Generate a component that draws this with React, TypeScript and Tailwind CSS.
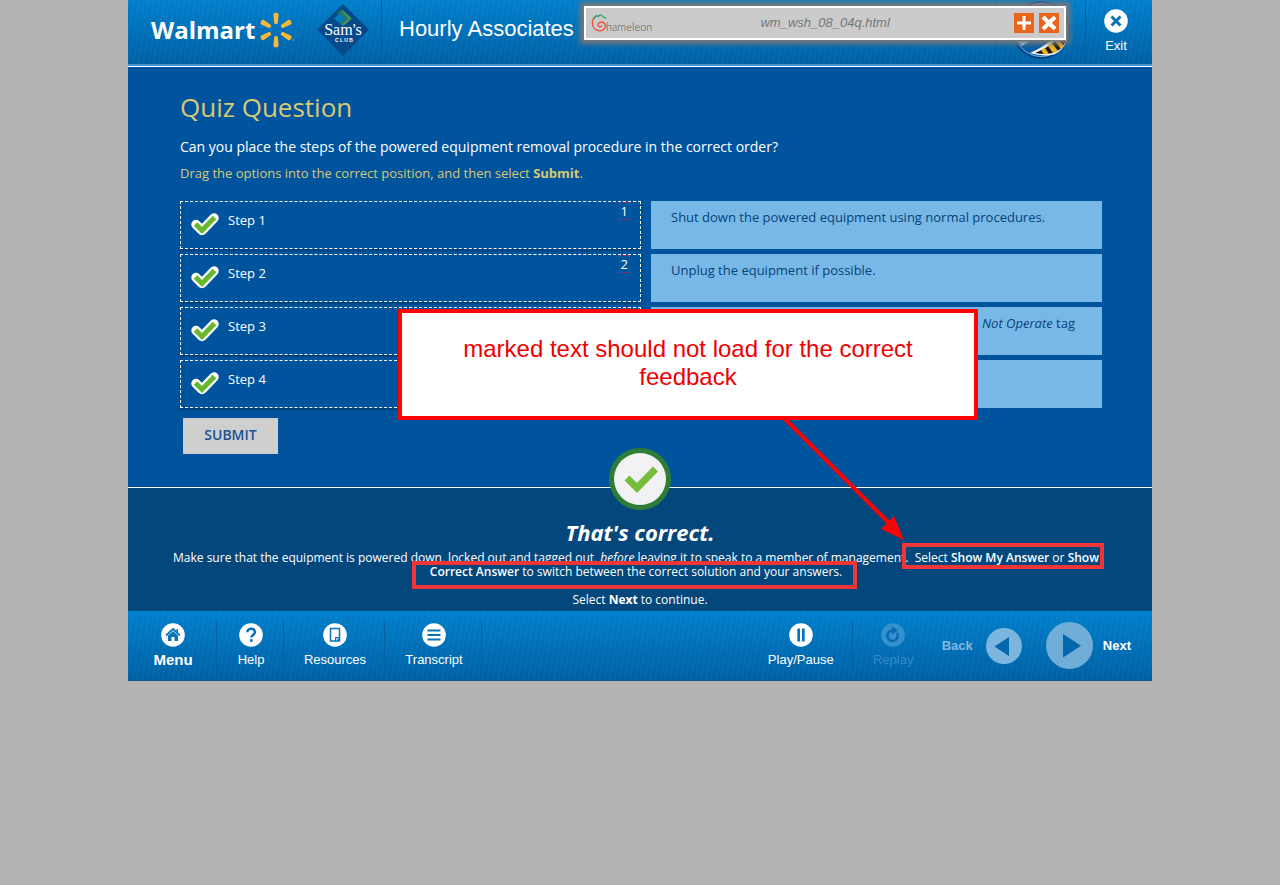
import React from "react";

const barClass =
  "bg-[repeating-linear-gradient(100deg,rgba(255,255,255,0.025)_0px,rgba(255,255,255,0.025)_2px,transparent_2px,transparent_5px),linear-gradient(to_bottom,#0080cc,#0060a4)]";

const steps = [
  { label: "Step 1", order: "1", option: <>Shut down the powered equipment using normal procedures.</> },
  { label: "Step 2", order: "2", option: <>Unplug the equipment if possible.</> },
  {
    label: "Step 3",
    order: "3",
    option: (
      <span className="block pr-[7px] text-right">
        <em>Do Not Operate</em> tag
      </span>
    ),
  },
  { label: "Step 4", order: "4", option: null },
];

function Spark() {
  return (
    <svg viewBox="-18 -18 36 36" className="size-9 shrink-0" aria-hidden="true">
      {[0, 60, 120, 180, 240, 300].map((a) => (
        <path
          key={a}
          transform={`rotate(${a})`}
          d="M-2.600-15.500C-2.600-18 2.600-18 2.600-15.500L1.800-7C1.600-5.700-1.600-5.700-1.800-7Z"
          fill="#f9b83a"
        />
      ))}
      <circle cx="17" cy="10" r="0.8" fill="#b9a56b" />
    </svg>
  );
}

function SamsLogo() {
  return (
    <svg viewBox="0 0 52 52" className="h-[52px] w-[52px] shrink-0" role="img" aria-label="Sam's Club">
      <path d="M26 0 52 25.500 26 52 0 25.500Z" fill="#074a8c" />
      <path d="m26 6 9 8.500-9 8-9-8Z" fill="#0879b8" />
      <path d="m25 5 10 9.500-9 8-3-3 5.500-5L20 8.500Z" fill="#27785a" opacity=".85" />
      <path d="m26 8 7 6.500-7 6" fill="none" stroke="#6d9d3b" strokeWidth="1.200" />
      <text x="26" y="31" textAnchor="middle" fontFamily="Liberation Serif, serif" fontSize="16" fill="#fff">
        Sam's
      </text>
      <text x="27" y="38" textAnchor="middle" fontFamily="Liberation Sans, sans-serif" fontSize="5" fontWeight="700" fill="#fff">
        C L U B
      </text>
    </svg>
  );
}

function StepCheck() {
  return (
    <svg viewBox="0 0 28 24" className="h-6 w-7 shrink-0" aria-hidden="true">
      <path d="M5 12.500 11 18.500 23 6" fill="none" stroke="#fff" strokeWidth="9.500" strokeLinecap="round" strokeLinejoin="round" />
      <path d="M4.500 12 11 18.500 23.500 5.500" fill="none" stroke="#67b82f" strokeWidth="5" />
    </svg>
  );
}

function Disc({ children }: { children: React.ReactNode }) {
  return (
    <svg viewBox="0 0 24 24" className="size-6" aria-hidden="true">
      <circle cx="12" cy="12" r="11.800" fill="#fff" />
      {children}
    </svg>
  );
}

const navItems = [
  {
    label: "Menu",
    box: "w-[89px] text-[15px] font-bold",
    icon: (
      <Disc>
        <path d="M5 12.500 12 6l7 6.500" fill="none" stroke="#0a72b8" strokeWidth="1.800" />
        <path d="M7 12.500 12 8.300l5 4.200V18h-3.500v-4h-3v4H7ZM15.500 6H17v4l-1.500-1.500Z" fill="#0a72b8" />
      </Disc>
    ),
  },
  {
    label: "Help",
    box: "w-[67px]",
    icon: (
      <Disc>
        <path d="M8.300 9.200c0-4.600 7.600-4.400 7.600 0 0 2.600-3.600 2.800-3.600 5.300" fill="none" stroke="#0a72b8" strokeWidth="2.500" />
        <rect x="11" y="16.200" width="2.600" height="2.600" fill="#0a72b8" />
      </Disc>
    ),
  },
  {
    label: "Resources",
    box: "w-[101px]",
    icon: (
      <Disc>
        <path d="M7.500 5.500h9v8.500l-3.500 4H7.500Z" fill="none" stroke="#0a72b8" strokeWidth="1.500" />
        <path d="M12 18.700V14h5.200v4.700Z" fill="#0a72b8" />
        <path d="M13.300 15.200h2.600l-2.600 2.600Z" fill="#fff" />
      </Disc>
    ),
  },
  {
    label: "Transcript",
    box: "w-[97px]",
    icon: (
      <Disc>
        <path d="M5.500 7.500h13M5.500 12h13M5.500 16.500h13" stroke="#0a72b8" strokeWidth="2.200" />
      </Disc>
    ),
  },
];

export default function App() {
  return (
    <div className="min-h-screen bg-[#b4b4b4] font-['Liberation_Sans',Arial,sans-serif] text-white">
      <div className="relative mx-auto max-w-[1024px]">
        <header className={`flex h-[66px] items-stretch border-b-2 border-[#4694cc] pl-[23px] ${barClass}`}>
          <div className="flex w-[231px] items-center gap-[3px] border-r border-[#0360a0] pb-1">
            <span className="font-['Open_Sans','Noto_Sans',sans-serif] text-[24px] leading-8 font-bold">Walmart</span>
            <Spark />
            <span className="ml-auto mr-3">
              <SamsLogo />
            </span>
          </div>
          <h1 className="flex flex-1 items-center pb-2 pl-[17px] text-[22px]">Hourly Associates</h1>
          <div className="flex w-[91px] justify-center border-x border-[#0360a0]">
            <svg viewBox="0 0 60 60" className="size-[60px]" aria-hidden="true">
              <circle cx="30" cy="30" r="28" fill="#075da8" stroke="#063e7b" strokeWidth="1.500" />
              <circle cx="30" cy="30" r="26.500" fill="none" stroke="#8fc4ea" strokeWidth=".8" />
              <path d="M7 41h12l-8 5Z" fill="#b7d5ee" />
              <path d="M19 53Q31 48 40 40H56Q52 51 43 54.500 31 57 19 53Z" fill="#fff" />
              <path d="M24 53Q36 48 44 41H55Q51 50 42 53 34 55 24 53Z" fill="#17191d" />
              <path d="m30 50 4-2 4 6-5 .5ZM37 46l4-3 6 8-5 2ZM44 41h5l4 5-3 3Z" fill="#eeb321" />
            </svg>
          </div>
          <a href="#exit" className="flex w-[66px] flex-col items-center pr-[6px] pt-[9px] text-[13px] leading-5">
            <svg viewBox="0 0 24 24" className="mb-[3px] size-6" aria-hidden="true">
              <circle cx="12" cy="12" r="11.800" fill="#fff" />
              <path d="m7.500 7.500 9 9m0-9-9 9" stroke="#0a72b8" strokeWidth="3" />
            </svg>
            Exit
          </a>
        </header>

        <main className="font-['Open_Sans','Noto_Sans',sans-serif]">
          <section className="h-[421px] border-t border-white bg-[#00549e] pl-[52px] pr-[50px] pt-[22px]">
            <h2 className="text-[26px] leading-9 text-[#d9c873]">Quiz Question</h2>
            <p className="mt-3 text-[14px] leading-5">
              Can you place the steps of the powered equipment removal procedure in the correct order?
            </p>
            <p className="mt-2 text-[13px] leading-4 text-[#d9c873]">
              Drag the options into the correct position, and then select <b>Submit</b>.
            </p>
            <ul className="mt-5 flex flex-col gap-[5px] text-[13px]">
              {steps.map((s) => (
                <li key={s.label} className="grid h-12 grid-cols-[461fr_451fr] gap-[10px]">
                  <div className="flex items-start border border-dashed border-white pl-[10px] pr-[10px] shadow-[0_2px_2px_rgba(0,0,0,0.25)]">
                    <span className="mt-[10px]">
                      <StepCheck />
                    </span>
                    <span className="ml-[9px] mt-2 leading-5">{s.label}</span>
                    <span className="ml-auto border border-dashed border-[#c4164c] px-px leading-4">{s.order}</span>
                  </div>
                  <div className="bg-[#78b8e7] px-5 pt-[6px] leading-5 text-[#07427a]">{s.option}</div>
                </li>
              ))}
            </ul>
            <button
              type="button"
              className="ml-[3px] mt-[10px] h-9 w-[95px] bg-[#cfcfcf] pb-1 text-[14px] font-semibold text-[#1c5190]"
            >
              SUBMIT
            </button>
          </section>

          <section className="relative h-[124px] border-t border-white bg-[#04477c] pt-[30px] text-center text-[12px] leading-[14px]">
            <svg viewBox="0 0 62 62" className="absolute -top-10 left-1/2 size-[62px] -translate-x-1/2" aria-hidden="true">
              <circle cx="31" cy="31" r="31" fill="#2e7d37" />
              <circle cx="31" cy="31" r="26" fill="#f2f2f4" />
              <path d="M18 30 28 40 46.500 21" fill="none" stroke="#76bd3b" strokeWidth="7" />
            </svg>
            <h3 className="text-[22px] leading-7 font-bold italic">That's correct.</h3>
            <p className="mt-[5px] pr-2 whitespace-nowrap">
              Make sure that the equipment is powered down, locked out and tagged out, <em>before</em> leaving it to speak
              to a member of management. &nbsp;Select <b className="font-semibold">Show My Answer</b> or{" "}
              <b className="font-semibold">Show</b>
              <br />
              <b className="font-semibold">Correct Answer</b> to switch between the correct solution and your answers.
            </p>
            <p className="mt-[14px]">
              Select <b>Next</b> to continue.
            </p>
          </section>
        </main>

        <footer className={`flex h-[70px] border-b border-[#0a5896] ${barClass}`}>
          <nav className="flex py-[10px]" aria-label="Course">
            {navItems.map((n) => (
              <button
                key={n.label}
                type="button"
                className={`flex flex-col items-center border-r border-[#0360a0] pt-[2px] pl-[2px] text-[13px] leading-5 ${n.box}`}
              >
                {n.icon}
                <span className="mt-[3px]">{n.label}</span>
              </button>
            ))}
          </nav>
          <div className="ml-auto flex py-[10px]">
            <button
              type="button"
              className="flex w-[105px] flex-col items-center border-r border-[#0360a0] pt-[2px] pl-[2px] text-[13px] leading-5"
            >
              <Disc>
                <path d="M9.700 5.500v13M14.300 5.500v13" stroke="#0a72b8" strokeWidth="2.700" />
              </Disc>
              <span className="mt-[3px]">Play/Pause</span>
            </button>
            <button
              type="button"
              disabled
              className="flex w-[79px] flex-col items-center pt-[2px] pl-[2px] text-[13px] leading-5 text-[#3489c4]"
            >
              <svg viewBox="0 0 24 24" className="size-6" aria-hidden="true">
                <circle cx="12" cy="12" r="11.800" fill="#3592ce" />
                <path d="M11 7.500a5.200 5.200 0 1 0 5 2.400" fill="none" stroke="#0869ad" strokeWidth="2.500" />
                <path d="m11 3 6 4.500-6 4Z" fill="#0869ad" />
              </svg>
              <span className="mt-[3px]">Replay</span>
            </button>
          </div>
          <button type="button" className="flex items-center gap-[13px] pl-[10px] text-[13px] font-bold text-[#80bae2]">
            Back
            <svg viewBox="0 0 36 36" className="size-9" aria-hidden="true">
              <circle cx="18" cy="18" r="18" fill="#7cb6de" />
              <path d="M23 9v19L8.500 18.500Z" fill="#0467ad" />
            </svg>
          </button>
          <button type="button" className="flex items-center gap-[10px] pl-6 pr-[21px] text-[13px] font-bold">
            <svg viewBox="0 0 47 47" className="size-[47px]" aria-hidden="true">
              <circle cx="23.500" cy="23.500" r="23.500" fill="#70add7" />
              <path d="M17 12v23.500L35 23.700Z" fill="#0467ad" />
            </svg>
            Next
          </button>
        </footer>

        <aside className="absolute left-[456px] top-[6px] flex h-[34px] w-[482px] items-center border-2 border-white bg-[#cbcbcb] pl-1 pr-[5px] shadow-[0_0_5px_4px_#777]">
          <svg viewBox="0 0 20 22" className="size-5" aria-hidden="true">
            <path d="M6 3C0 6 0 17 7 19q7 2 9-4 0-5-5-5-4 1-3 4 2 3 4 0" fill="none" stroke="#ef4c3c" strokeWidth="1.400" />
            <path d="M3 7Q6 1 8 4q3-4 5 0l4 2" fill="none" stroke="#28a862" strokeWidth="1.400" />
          </svg>
          <span className="-ml-1 mt-2 font-['Lato',sans-serif] text-[11px] font-light text-[#555]">hameleon</span>
          <span className="flex-1 pr-4 text-center text-[13px] text-[#777] italic">wm_wsh_08_04q.html</span>
          <div className="flex gap-[5px]">
            <button type="button" aria-label="Expand" className="size-5 bg-[#eb641b]">
              <svg viewBox="0 0 20 20" aria-hidden="true">
                <path d="M10 3v14M3 10h14" stroke="#fff" strokeWidth="3" />
              </svg>
            </button>
            <button type="button" aria-label="Close" className="size-5 bg-[#eb641b]">
              <svg viewBox="0 0 20 20" aria-hidden="true">
                <path d="m4 4 12 12m0-12L4 16" stroke="#fff" strokeWidth="4" />
              </svg>
            </button>
          </div>
        </aside>

        <svg viewBox="0 0 130 130" className="absolute left-[650px] top-[412px] size-[130px]" aria-hidden="true">
          <path d="M6 6 114 114" stroke="#fa0505" strokeWidth="4" />
          <path d="M126 128 103 117l13-13Z" fill="#fa0505" />
        </svg>
        <div className="absolute left-[270px] top-[309px] flex h-[111px] w-[580px] justify-center border-4 border-[#f90303] bg-white px-12 pt-[22px] text-center text-[24px] leading-7 text-[#f00000]">
          <p>
            marked text should not load for the correct
            <br />
            feedback
          </p>
        </div>
        <div className="absolute left-[774px] top-[543px] h-[26px] w-[202px] border-4 border-[#ef3535]" />
        <div className="absolute left-[284px] top-[561px] h-7 w-[445px] border-4 border-[#ef3535]" />
      </div>
    </div>
  );
}
